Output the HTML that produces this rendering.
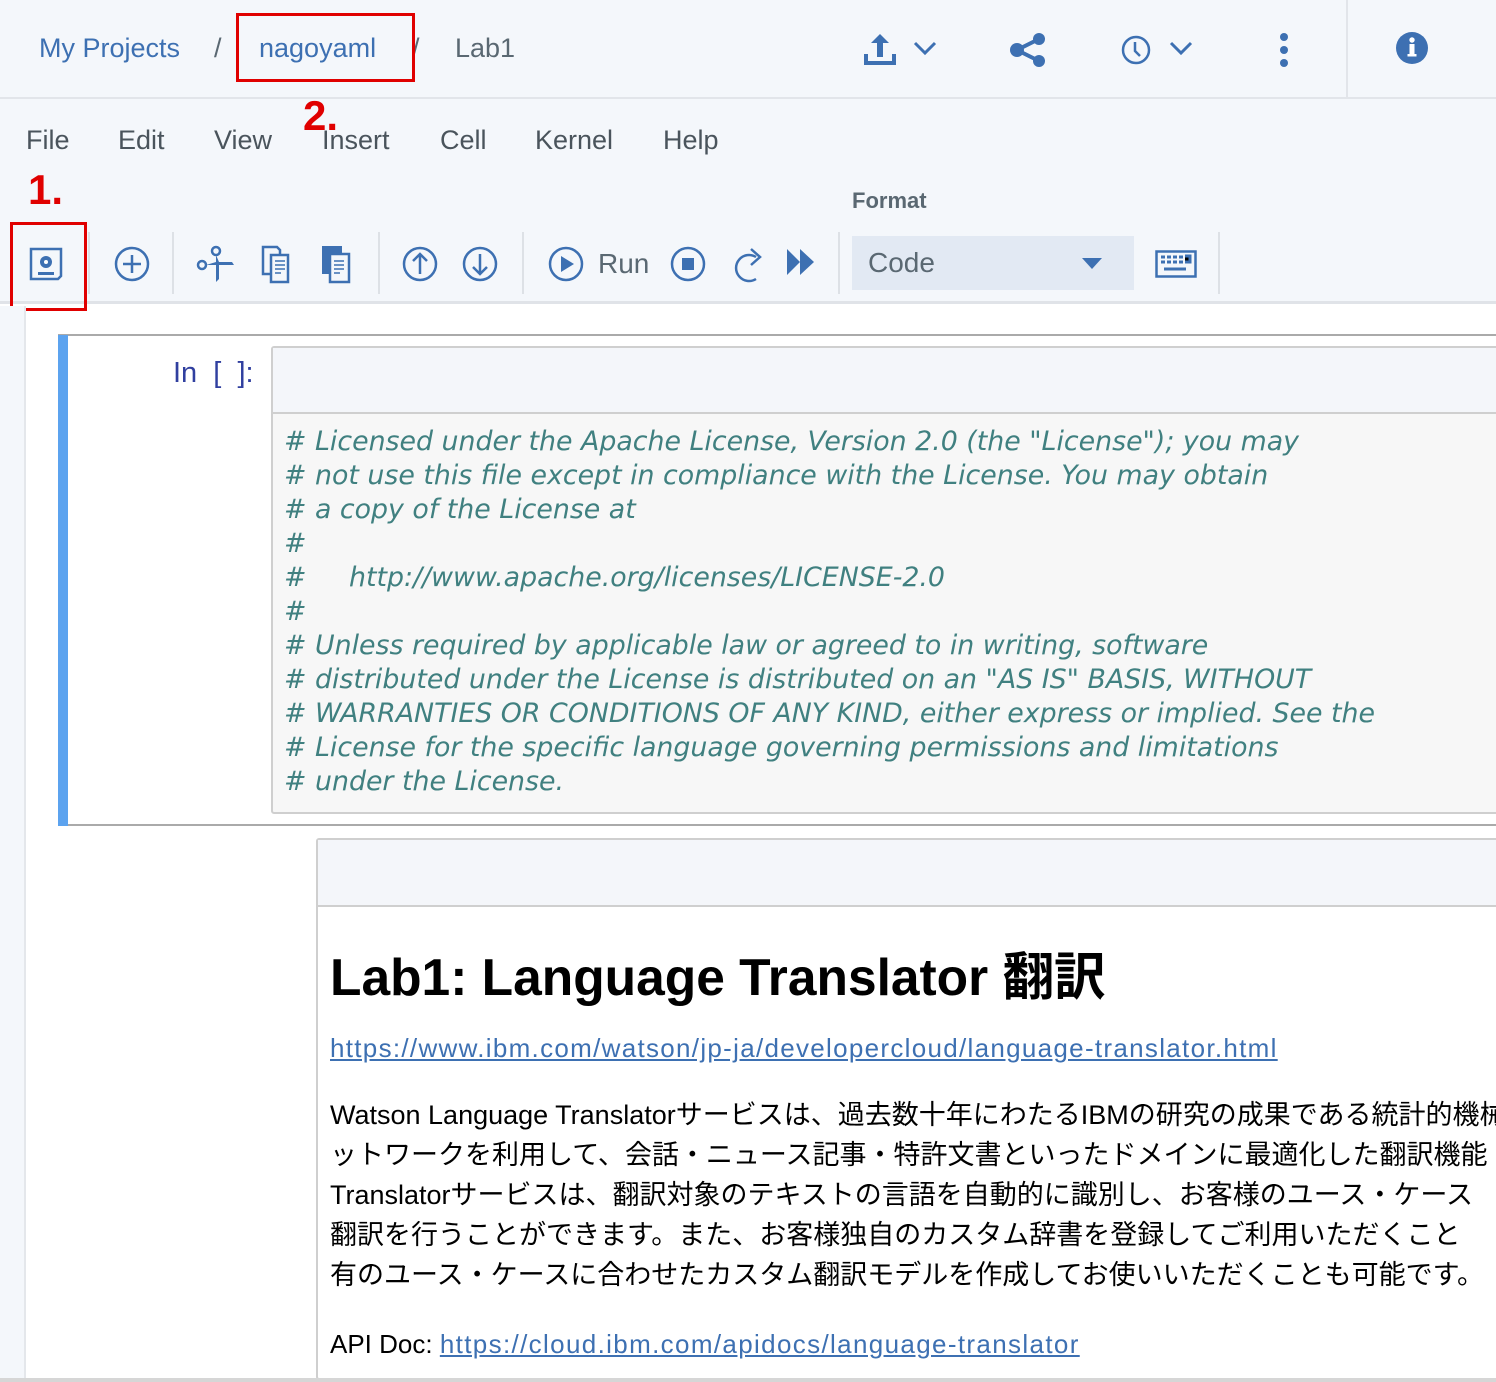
<!DOCTYPE html>
<html><head><meta charset="utf-8"><style>
*{margin:0;padding:0;box-sizing:border-box}
body{width:1496px;height:1382px;overflow:hidden;background:#fff;font-family:"Liberation Sans","Noto Sans CJK JP",sans-serif;position:relative}
.abs{position:absolute}
.hdr{left:0;top:0;width:1496px;height:99px;background:#f4f7fb;border-bottom:2px solid #e2e5ea}
.bc{top:33px;font-size:27px;color:#5a6872;white-space:nowrap}
.menu{top:125px;font-size:27px;color:#4a545c}
.tb{left:0;top:99px;width:1496px;height:205px;background:#f4f7fb;border-bottom:3px solid #e0e3e8}
.sep{top:232px;width:2px;height:62px;background:#dde1e6}
.red{border:3px solid #e00000}
.num{color:#e00000;font-weight:bold;font-size:42px}
svg{position:absolute;overflow:visible}
.code{font-family:"DejaVu Sans",sans-serif;font-style:italic;font-size:26.8px;color:#408080;line-height:34px;white-space:pre;left:284px;top:425px}
.md{font-size:27px;color:#000;line-height:40px;white-space:nowrap}
a{color:#3d70b2;text-decoration:underline}
</style></head><body>
<div class="abs hdr"></div>
<div class="abs" style="left:1346px;top:0;width:2px;height:99px;background:#e2e5ea"></div>
<div class="abs bc" style="left:39px;color:#3d70b2">My Projects</div>
<div class="abs bc" style="left:214px">/</div>
<div class="abs bc" style="left:259px;color:#3d70b2">nagoyaml</div>
<div class="abs bc" style="left:412px">/</div>
<div class="abs bc" style="left:455px">Lab1</div>
<div class="abs red" style="left:236px;top:13px;width:179px;height:69px"></div>
<svg style="left:862px;top:32px" width="36" height="36" viewBox="0 0 36 36"><path d="M2 22v11h32V22h-4v7H6v-7z M18 2l-9 9h6v14h6V11h6z" fill="#3d70b2"/></svg>
<svg style="left:913px;top:40px" width="24" height="16" viewBox="0 0 24 16"><path d="M2 3l10 10L22 3" fill="none" stroke="#3d70b2" stroke-width="3"/></svg>
<svg style="left:1010px;top:32px" width="36" height="36" viewBox="0 0 36 36"><path d="M29 7L7 18l22 11" fill="none" stroke="#3d70b2" stroke-width="4"/><circle cx="29" cy="7" r="6" fill="#3d70b2"/><circle cx="7" cy="18" r="7" fill="#3d70b2"/><circle cx="29" cy="29" r="6" fill="#3d70b2"/></svg>
<svg style="left:1120px;top:34px" width="32" height="32" viewBox="0 0 32 32"><circle cx="16" cy="16" r="13" fill="none" stroke="#3d70b2" stroke-width="2.5"/><path d="M15 8v9l5 5" fill="none" stroke="#3d70b2" stroke-width="2.5"/></svg>
<svg style="left:1169px;top:40px" width="24" height="16" viewBox="0 0 24 16"><path d="M2 3l10 10L22 3" fill="none" stroke="#3d70b2" stroke-width="3"/></svg>
<svg style="left:1276px;top:32px" width="16" height="36" viewBox="0 0 16 36"><circle cx="8" cy="5" r="4" fill="#3d70b2"/><circle cx="8" cy="18" r="4" fill="#3d70b2"/><circle cx="8" cy="31" r="4" fill="#3d70b2"/></svg>
<svg style="left:1395px;top:31px" width="34" height="34" viewBox="0 0 34 34"><ellipse cx="17" cy="17" rx="16" ry="16" fill="#3d70b2"/><rect x="14.5" y="13" width="5" height="12" fill="#fff"/><rect x="12.5" y="23" width="9" height="2.5" fill="#fff"/><circle cx="17" cy="9" r="2.7" fill="#fff"/></svg>
<div class="abs tb"></div>
<div class="abs menu" style="left:26px">File</div>
<div class="abs menu" style="left:118px">Edit</div>
<div class="abs menu" style="left:214px">View</div>
<div class="abs menu" style="left:322px">Insert</div>
<div class="abs menu" style="left:440px">Cell</div>
<div class="abs menu" style="left:535px">Kernel</div>
<div class="abs menu" style="left:663px">Help</div>
<div class="abs num" style="left:303px;top:92px">2.</div>
<div class="abs num" style="left:28px;top:166px">1.</div>
<div class="abs" style="left:852px;top:188px;font-size:22px;font-weight:bold;color:#5a6872">Format</div>
<div class="abs sep" style="left:88px"></div>
<div class="abs sep" style="left:172px"></div>
<div class="abs sep" style="left:378px"></div>
<div class="abs sep" style="left:522px"></div>
<div class="abs sep" style="left:838px"></div>
<div class="abs sep" style="left:1218px"></div>
<svg style="left:29px;top:247px" width="34" height="34" viewBox="0 0 34 34"><path d="M2 2h30v27l-3 3H2z" fill="none" stroke="#3d70b2" stroke-width="2.5"/><circle cx="17" cy="15" r="6" fill="#3d70b2"/><circle cx="17" cy="15" r="2" fill="#fff"/><rect x="9" y="25" width="16" height="3" fill="#3d70b2"/></svg>
<svg style="left:114px;top:246px" width="36" height="36" viewBox="0 0 36 36"><circle cx="18" cy="18" r="16" fill="none" stroke="#3d70b2" stroke-width="2.5"/><path d="M18 9v18M9 18h18" stroke="#3d70b2" stroke-width="2.5"/></svg>
<svg style="left:196px;top:246px" width="40" height="36" viewBox="0 0 40 36"><circle cx="6" cy="19" r="4" fill="none" stroke="#3d70b2" stroke-width="2.5"/><circle cx="20" cy="5" r="4" fill="none" stroke="#3d70b2" stroke-width="2.5"/><path d="M10 19h28l-2-3H20z" fill="#3d70b2"/><path d="M20 9v27l3-3V16z" fill="#3d70b2"/></svg>
<svg style="left:261px;top:245px" width="30" height="38" viewBox="0 0 30 38"><path d="M2 2h14l3 3v24H2z" fill="#f4f7fb" stroke="#3d70b2" stroke-width="2.5"/><path d="M10 10h17v27H10z" fill="#f4f7fb" stroke="#3d70b2" stroke-width="2.5"/><path d="M14 16h10M14 20h10M14 24h10M14 28h6" stroke="#3d70b2" stroke-width="1.5"/></svg>
<svg style="left:321px;top:245px" width="30" height="38" viewBox="0 0 30 38"><path d="M1 1h20v28H1z" fill="#3d70b2"/><path d="M9 9h19v28H9z" fill="#f4f7fb" stroke="#3d70b2" stroke-width="2.5"/><path d="M13 16h10M13 20h10M13 24h10M13 28h6" stroke="#3d70b2" stroke-width="1.5"/></svg>
<svg style="left:402px;top:246px" width="36" height="36" viewBox="0 0 36 36"><circle cx="18" cy="18" r="16" fill="none" stroke="#3d70b2" stroke-width="2.5"/><path d="M18 28V9M11 15l7-7 7 7" fill="none" stroke="#3d70b2" stroke-width="2.5"/></svg>
<svg style="left:462px;top:246px" width="36" height="36" viewBox="0 0 36 36"><circle cx="18" cy="18" r="16" fill="none" stroke="#3d70b2" stroke-width="2.5"/><path d="M18 8v19M11 21l7 7 7-7" fill="none" stroke="#3d70b2" stroke-width="2.5"/></svg>
<svg style="left:548px;top:246px" width="36" height="36" viewBox="0 0 36 36"><circle cx="18" cy="18" r="16" fill="none" stroke="#3d70b2" stroke-width="2.5"/><path d="M13 10v16l13-8z" fill="#3d70b2"/></svg>
<div class="abs" style="left:598px;top:248px;font-size:28px;color:#5a6872">Run</div>
<svg style="left:670px;top:246px" width="36" height="36" viewBox="0 0 36 36"><circle cx="18" cy="18" r="16" fill="none" stroke="#3d70b2" stroke-width="2.5"/><rect x="12" y="12" width="12" height="12" fill="#3d70b2"/></svg>
<svg style="left:732px;top:245px" width="34" height="40" viewBox="0 0 34 40"><path d="M24 12A13 13 0 1 0 24 34" fill="none" stroke="#3d70b2" stroke-width="2.5"/><path d="M19 4l9 8-9 8" fill="none" stroke="#3d70b2" stroke-width="2.5"/></svg>
<svg style="left:786px;top:248px" width="30" height="28" viewBox="0 0 30 28"><path d="M1 1l13 13L1 27zM14 1l14 13-14 13z" fill="#3d70b2"/></svg>
<div class="abs" style="left:852px;top:236px;width:282px;height:54px;background:#e2e9f3"></div>
<div class="abs" style="left:868px;top:247px;font-size:28px;color:#5a6872">Code</div>
<svg style="left:1082px;top:258px" width="20" height="12" viewBox="0 0 20 12"><path d="M0 0h20L10 11z" fill="#3d70b2"/></svg>
<svg style="left:1155px;top:250px" width="42" height="28" viewBox="0 0 42 28"><rect x="1.5" y="1.5" width="39" height="25" fill="none" stroke="#3d70b2" stroke-width="2.5"/><path d="M6 7h4M12 7h4M18 7h4M24 7h4M30 6h5v6h-5M6 12h4M12 12h4M18 12h4M24 12h4M9 19h22" stroke="#3d70b2" stroke-width="3"/></svg>
<div class="abs red" style="left:10px;top:222px;width:77px;height:89px"></div>
<div class="abs" style="left:0;top:306px;width:26px;height:1076px;background:#f4f7fb;border-right:2px solid #e4e7eb"></div>
<div class="abs" style="left:58px;top:334px;width:1440px;height:492px;border-top:2px solid #aaa;border-bottom:2px solid #aaa"></div>
<div class="abs" style="left:58px;top:335px;width:10px;height:491px;background:#5ca3ef"></div>
<div class="abs" style="left:173px;top:357px;font-size:29px;color:#303f9f">In&nbsp; [&nbsp; ]:</div>
<div class="abs" style="left:271px;top:346px;width:1230px;height:468px;border:2px solid #cfcfcf;border-radius:3px;background:#f7f7f7"></div>
<div class="abs" style="left:273px;top:348px;width:1225px;height:66px;background:#f4f6fa;border-bottom:2px solid #cfcfcf"></div>
<div class="abs code"># Licensed under the Apache License, Version 2.0 (the "License"); you may
# not use this file except in compliance with the License. You may obtain
# a copy of the License at
#
#     http://www.apache.org/licenses/LICENSE-2.0
#
# Unless required by applicable law or agreed to in writing, software
# distributed under the License is distributed on an "AS IS" BASIS, WITHOUT
# WARRANTIES OR CONDITIONS OF ANY KIND, either express or implied. See the
# License for the specific language governing permissions and limitations
# under the License.</div>
<div class="abs" style="left:316px;top:838px;width:1190px;height:542px;border:2px solid #cfcfcf;border-radius:3px;background:#fff"></div>
<div class="abs" style="left:318px;top:840px;width:1180px;height:67px;background:#f4f6fa;border-bottom:2px solid #cfcfcf"></div>
<div class="abs" style="left:0;top:1378px;width:1496px;height:4px;background:#d6d6d6"></div>
<div class="abs" style="left:330px;top:942px;font-size:51.5px;font-weight:bold;color:#000;white-space:nowrap;line-height:70px">Lab1: Language Translator 翻訳</div>
<div class="abs md" style="left:330px;top:1028px;font-size:26px"><a style="letter-spacing:1.3px">https://www.ibm.com/watson/jp-ja/developercloud/language-translator.html</a></div>
<div class="abs md" style="left:330px;top:1095px">Watson Language Translatorサービスは、過去数十年にわたるIBMの研究の成果である統計的機械翻訳<br>ットワークを利用して、会話・ニュース記事・特許文書といったドメインに最適化した翻訳機能<br>Translatorサービスは、翻訳対象のテキストの言語を自動的に識別し、お客様のユース・ケース<br>翻訳を行うことができます。また、お客様独自のカスタム辞書を登録してご利用いただくこと<br>有のユース・ケースに合わせたカスタム翻訳モデルを作成してお使いいただくことも可能です。</div>
<div class="abs md" style="left:330px;top:1324px;font-size:26px">API Doc: <a style="letter-spacing:1.35px">https://cloud.ibm.com/apidocs/language-translator</a></div>
</body></html>
